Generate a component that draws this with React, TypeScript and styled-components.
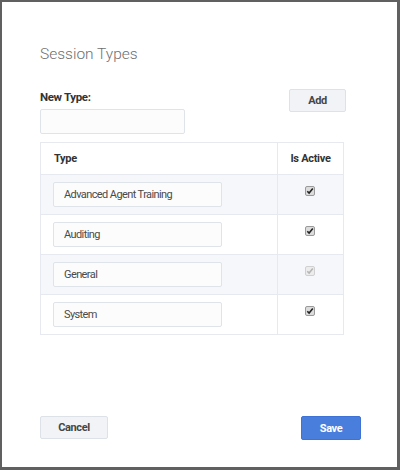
import React from "react";
import styled, { createGlobalStyle } from "styled-components";

const GlobalStyle = createGlobalStyle`
  html, body {
    margin: 0;
    padding: 0;
    background: #ffffff;
  }
  body {
    font-family: Roboto, "Liberation Sans", Arial, sans-serif;
  }
`;

const Frame = styled.div`
  width: 400px;
  height: 470px;
  box-sizing: border-box;
  border-style: solid;
  border-color: #606060;
  border-width: 2px 3px 3px 2px;
  background: #ffffff;
  display: flex;
  flex-direction: column;
  padding: 0 0 27px 38px;
`;

const Title = styled.h2`
  margin: 42px 0 0 0;
  font-size: 15.5px;
  font-weight: 300;
  line-height: 20px;
  color: #6f6f6f;
`;

const FormRow = styled.div`
  width: 306px;
  display: flex;
  justify-content: space-between;
  align-items: flex-start;
  margin-top: 25px;
`;

const Field = styled.div`
  display: flex;
  flex-direction: column;
`;

const Label = styled.label`
  font-size: 11.5px;
  font-weight: 700;
  letter-spacing: -0.35px;
  line-height: 14px;
  color: #333333;
  margin-top: 1px;
`;

const TextInput = styled.input<{ $width: number }>`
  box-sizing: border-box;
  width: ${(p) => p.$width}px;
  height: 25px;
  border: 1px solid #dfe4ea;
  border-radius: 2px;
  background: #fcfcfc;
  padding: 0 10px;
  font-family: inherit;
  font-size: 11px;
  letter-spacing: -0.6px;
  color: #4a4a4a;
  outline: none;
`;

const NewInput = styled(TextInput)`
  margin-top: 5px;
`;

const Button = styled.button<{ $primary?: boolean; $width: number }>`
  box-sizing: border-box;
  width: ${(p) => p.$width}px;
  height: ${(p) => (p.$primary ? 24 : 23)}px;
  border-radius: 2px;
  border: 1px solid ${(p) => (p.$primary ? "#3f72d6" : "#dde2e8")};
  background: ${(p) => (p.$primary ? "#4a7edd" : "#f1f3f6")};
  color: ${(p) => (p.$primary ? "#ffffff" : "#464646")};
  font-family: inherit;
  font-size: 11px;
  font-weight: 700;
  letter-spacing: -0.4px;
  padding: 0;
  cursor: pointer;
`;

const Table = styled.table`
  width: 304px;
  margin-top: 8px;
  border-collapse: collapse;
  table-layout: fixed;
  border: 1px solid #e6eaf0;
`;

const HeadCell = styled.th<{ $center?: boolean }>`
  height: 31px;
  padding: 0 0 0 ${(p) => (p.$center ? 0 : 13)}px;
  text-align: ${(p) => (p.$center ? "center" : "left")};
  font-size: 11px;
  font-weight: 700;
  letter-spacing: -0.3px;
  color: #333333;
  border: 1px solid #e6eaf0;
`;

const Row = styled.tr<{ $shaded: boolean }>`
  background: ${(p) => (p.$shaded ? "#f5f7fa" : "#ffffff")};
`;

const Cell = styled.td<{ $center?: boolean }>`
  height: 39px;
  padding: ${(p) => (p.$center ? "0 2px 0 0" : "0 0 0 12px")};
  vertical-align: ${(p) => (p.$center ? "top" : "middle")};
  text-align: ${(p) => (p.$center ? "center" : "left")};
  border: 1px solid #e6eaf0;
`;

const Check = styled.span<{ $disabled?: boolean }>`
  display: inline-block;
  box-sizing: border-box;
  width: 10px;
  height: 10px;
  margin-top: 11px;
  border: 1px solid ${(p) => (p.$disabled ? "#d0d0d0" : "#9a9a9a")};
  border-radius: 2px;
  background: ${(p) => (p.$disabled ? "#ececec" : "#dcdcdc")};
  position: relative;

  svg {
    position: absolute;
    left: 0;
    top: 0;
  }
`;

const Footer = styled.div`
  margin-top: auto;
  width: 321px;
  display: flex;
  justify-content: space-between;
`;

const types = [
  { name: "Advanced Agent Training", disabled: false },
  { name: "Auditing", disabled: false },
  { name: "General", disabled: true },
  { name: "System", disabled: false },
];

function CheckBox({ disabled }: { disabled?: boolean }) {
  return (
    <Check $disabled={disabled}>
      <svg width="8" height="8" viewBox="0 0 8 8">
        <path
          d="M1.3 4.2 L3.1 6 L6.8 1.6"
          fill="none"
          stroke={disabled ? "#b5b5b5" : "#222222"}
          strokeWidth="1.6"
        />
      </svg>
    </Check>
  );
}

export default function App() {
  return (
    <>
      <GlobalStyle />
      <Frame>
        <Title>Session Types</Title>
        <FormRow>
          <Field>
            <Label>New Type:</Label>
            <NewInput $width={145} />
          </Field>
          <Button $width={57}>Add</Button>
        </FormRow>
        <Table>
          <colgroup>
            <col style={{ width: 237 }} />
            <col />
          </colgroup>
          <thead>
            <tr>
              <HeadCell>Type</HeadCell>
              <HeadCell $center>Is Active</HeadCell>
            </tr>
          </thead>
          <tbody>
            {types.map((t, i) => (
              <Row key={t.name} $shaded={i % 2 === 0}>
                <Cell>
                  <TextInput $width={169} defaultValue={t.name} />
                </Cell>
                <Cell $center>
                  <CheckBox disabled={t.disabled} />
                </Cell>
              </Row>
            ))}
          </tbody>
        </Table>
        <Footer>
          <Button $width={68}>Cancel</Button>
          <Button $primary $width={60}>
            Save
          </Button>
        </Footer>
      </Frame>
    </>
  );
}
